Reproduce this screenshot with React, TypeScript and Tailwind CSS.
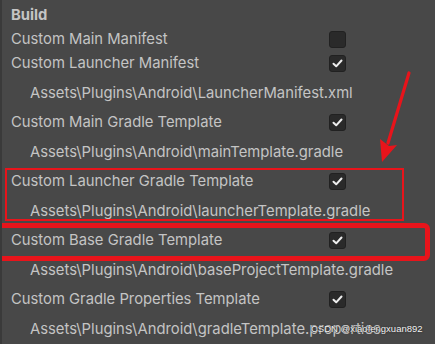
import React from 'react';

type Row = {
  label: string;
  kind: 'toggle' | 'path';
  checked?: boolean;
  h: string;
};

const rows: Row[] = [
  { label: 'Custom Main Manifest', kind: 'toggle', checked: false, h: 'h-[24px]' },
  { label: 'Custom Launcher Manifest', kind: 'toggle', checked: true, h: 'h-[24px]' },
  { label: 'Assets\\Plugins\\Android\\LauncherManifest.xml', kind: 'path', h: 'h-[29.5px] mt-[3px]' },
  { label: 'Custom Main Gradle Template', kind: 'toggle', checked: true, h: 'h-[29.5px]' },
  { label: 'Assets\\Plugins\\Android\\mainTemplate.gradle', kind: 'path', h: 'h-[29.5px]' },
  { label: 'Custom Launcher Gradle Template', kind: 'toggle', checked: true, h: 'h-[29.5px]' },
  { label: 'Assets\\Plugins\\Android\\launcherTemplate.gradle', kind: 'path', h: 'h-[29.5px]' },
  { label: 'Custom Base Gradle Template', kind: 'toggle', checked: true, h: 'h-[29.5px]' },
  { label: 'Assets\\Plugins\\Android\\baseProjectTemplate.gradle', kind: 'path', h: 'h-[29.5px]' },
  { label: 'Custom Gradle Properties Template', kind: 'toggle', checked: true, h: 'h-[29.5px]' },
  { label: 'Assets\\Plugins\\Android\\gradleTemplate.properties', kind: 'path', h: 'h-[29.5px]' },
];

function Checkbox({ checked }: { checked?: boolean }) {
  return (
    <div className="w-[17px] h-[17px] rounded-[3px] bg-[#2a2a2a] border border-[#212121] flex items-center justify-center">
      {checked && (
        <svg width="11" height="9" viewBox="0 0 11 9">
          <path d="M1.5 4.8 L4.2 7.3 L9.5 1.5" fill="none" stroke="#eeeeee" strokeWidth="2" strokeLinecap="round" strokeLinejoin="round" />
        </svg>
      )}
    </div>
  );
}

export default function App() {
  return (
    <div
      className="relative w-[435px] h-[344px] overflow-hidden bg-[#484848] border-l-2 border-[#3a3a3a] text-[#c4c4c4] text-[14.8px]"
      style={{ fontFamily: 'Inter, "Noto Sans", sans-serif' }}
    >
      <div className="flex flex-col pt-[3px]">
        <div className="h-[24px] flex items-center pl-[9px] font-bold">Build</div>
        {rows.map((r, i) => (
          <div key={i} className={`${r.h} flex items-center`}>
            {r.kind === 'toggle' ? (
              <>
                <div className="w-[327px] pl-[9px] whitespace-nowrap">{r.label}</div>
                <Checkbox checked={r.checked} />
              </>
            ) : (
              <div className="pl-[28px] whitespace-nowrap">{r.label}</div>
            )}
          </div>
        ))}
      </div>

      {/* annotations */}
      <div className="absolute left-[3px] top-[168px] w-[399px] h-[53px] border-2 border-[#e8141b]" />
      <div className="absolute left-[-12px] top-[223px] w-[440px] h-[38px] border-[5px] border-[#e8141b] rounded-[6px]" />
      <svg className="absolute left-0 top-0" width="435" height="344">
        <line x1="407" y1="73" x2="386" y2="143" stroke="#e8141b" strokeWidth="3.2" strokeLinecap="round" />
        <path d="M378 139 L380 162 L395 145 L387 146 Z" fill="#e8141b" />
      </svg>

      <div
        className="absolute left-[309px] top-[322px] text-[9.5px] text-[#f2f2f2] whitespace-nowrap"
        style={{ fontFamily: '"Liberation Sans", Arial, sans-serif', textShadow: '0 0 2px #333, 0 0 1px #333' }}
      >
        CSDN @xiaofengxuan892
      </div>
    </div>
  );
}
